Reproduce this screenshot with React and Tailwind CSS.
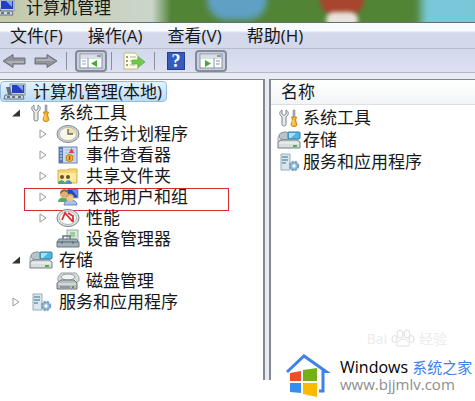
import { useState } from "react";

const Computer = () => (
  <svg viewBox="0 0 24 20" className="h-5 w-6 shrink-0">
    <rect x="7" y="2" width="15" height="11" fill="#c9d5e2" stroke="#8596a8" />
    <rect x="9" y="3" width="12" height="8" fill="#243fc4" />
    <path d="M14 3h6v6z" fill="#7fa6f4" />
    <path d="M3 5h4l2 8H5z" fill="#5b6f86" />
    <path d="M2 13h18l1 4H1z" fill="#d5dde3" stroke="#64727d" />
    <path d="M4 15h3M9 15h3M15 15h3" stroke="#44525d" strokeWidth="1.500" />
  </svg>
);

const Tools = () => (
  <svg viewBox="0 0 24 20" className="h-5 w-6 shrink-0">
    <path
      d="M5 2v4l2 1.500L9 6V2c3 1.500 3 5 0 7v7.500c0 2-4 2-4 0V9C2 7 2 3.500 5 2z"
      fill="#e6eaec"
      stroke="#7d868d"
    />
    <path d="M16 2h2v8h-2z" fill="#a7afb5" stroke="#7b858b" strokeWidth=".5" />
    <path d="M14.500 9h5l-1 3 1.500 5c-1 2-5 2-6 0l1.500-5z" fill="#f6b62d" stroke="#c9851b" />
    <path d="M16 12v5" stroke="#ffe48b" />
  </svg>
);

const Clock = () => (
  <svg viewBox="0 0 24 20" className="h-5 w-6 shrink-0">
    <ellipse cx="12" cy="10" rx="11" ry="8.500" fill="#c9cfd2" stroke="#828b91" />
    <ellipse cx="12" cy="10" rx="8.500" ry="6.500" fill="#fbf7e4" stroke="#a1a7aa" strokeWidth=".6" />
    <path d="M12 10V4a8 6 0 0 1 8 6z" fill="#f8dda0" />
    <path d="M12 5v5h5" fill="none" stroke="#596670" strokeWidth="1.300" />
  </svg>
);

const EventLog = () => (
  <svg viewBox="0 0 24 20" className="h-5 w-6 shrink-0">
    <rect x="3" y="2" width="18" height="16" fill="#cbdcf1" stroke="#6b80a6" />
    <path d="M3 2h4v16H3z" fill="#5879b8" />
    <path d="M4 5h2M4 8h2M4 11h2M4 14h2" stroke="#e9f0fc" />
    <path d="M9 5h10M9 8h10M9 11h10M9 15h10" stroke="#a3b9da" />
    <path d="M15.500 3l2.500 5h-5z" fill="#e63e35" />
    <circle cx="13.500" cy="13" r="3.500" fill="#f4b92f" stroke="#bd7931" />
    <path d="M13.500 11v4" stroke="#cf3128" strokeWidth="1.500" />
  </svg>
);

const SharedFolder = () => (
  <svg viewBox="0 0 24 20" className="h-5 w-6 shrink-0">
    <path d="M2 4h9l2-1h8v14H2z" fill="#f7d66f" stroke="#d3b256" />
    <path d="M3 7h17v9H3z" fill="#fae99f" />
    <circle cx="6" cy="11" r="2" fill="#665331" />
    <circle cx="12" cy="11" r="2" fill="#665331" />
    <path d="M2 18c0-5 7-5 7 0z" fill="#42a68a" />
    <path d="M9 18c0-5 7-5 7 0z" fill="#4793c1" />
  </svg>
);

const Users = () => (
  <svg viewBox="0 0 24 20" className="h-5 w-6 shrink-0">
    <rect x="11" y="2" width="11" height="9" fill="#2544c5" stroke="#9dacbd" />
    <path d="M16 3h5v6z" fill="#6590ed" />
    <path d="M2 15c0-6 10-6 11 0z" fill="#61a861" />
    <circle cx="8" cy="7" r="4" fill="#dfb078" />
    <path d="M4 7c0-6 8-6 8-1L8 4z" fill="#886328" />
    <path d="M8 18c0-7 13-7 13 0z" fill="#a9c0e6" stroke="#6f8cc2" />
    <circle cx="14" cy="11" r="3.500" fill="#f0c690" />
    <path d="M10 11c0-6 8-5 8-1l-4-2z" fill="#d9a544" />
  </svg>
);

const Performance = () => (
  <svg viewBox="0 0 24 20" className="h-5 w-6 shrink-0">
    <ellipse cx="12" cy="10" rx="11" ry="8.500" fill="#e6e9e9" stroke="#777e82" />
    <ellipse cx="12" cy="10" rx="8.500" ry="6.500" fill="#fff" stroke="#b0b7ba" />
    <path d="M6 12l3-7 8 9M12 5l5 3v6" fill="none" stroke="#d72f32" strokeWidth="1.800" />
  </svg>
);

const Device = () => (
  <svg viewBox="0 0 24 20" className="h-5 w-6 shrink-0">
    <rect x="11" y="1" width="11" height="10" fill="#dce4e6" stroke="#a0abae" />
    <rect x="14" y="3" width="5" height="5" fill="#9fcd98" />
    <path d="M7 10V7h7v3" fill="none" stroke="#68757d" strokeWidth="1.500" />
    <path d="M3 10h17l3 3v5H1v-5z" fill="#a3b1bb" stroke="#657985" />
    <path d="M1 13h21M6 12v3M17 12v3" stroke="#536670" />
  </svg>
);

const Storage = () => (
  <svg viewBox="0 0 24 20" className="h-5 w-6 shrink-0">
    <path d="M1 7l3-4h13l3 4v5H1z" fill="#d8dfe0" stroke="#a5b0b5" />
    <ellipse cx="8" cy="6" rx="6" ry="4" fill="#b9c4c9" stroke="#829198" />
    <rect x="11" y="2" width="12" height="7" rx="1" fill="#49b7e9" stroke="#367a9c" />
    <path d="M12 3h7l-5 5h-2z" fill="#a9e1f6" />
    <path d="M1 12l3-2h16l3 2v6H1z" fill="#d8ddde" stroke="#747f84" />
    <path d="M2 13h20" stroke="#f8f9f9" />
    <path d="M16 16h4" stroke="#46b443" strokeWidth="2" />
  </svg>
);

const Disk = () => (
  <svg viewBox="0 0 24 20" className="h-5 w-6 shrink-0">
    <path d="M2 6l3-4h15l3 4v4l-4 2H6l-4-2z" fill="#d8dddd" stroke="#9aa1a2" />
    <ellipse cx="12" cy="6" rx="7" ry="3" fill="#f1f2f1" stroke="#999f9f" />
    <path d="M1 12l4-3h13l3 3v6H1z" fill="#b7bebf" stroke="#71797b" />
    <path d="M2 13h18" stroke="#eef0f0" />
    <path d="M4 16h10" stroke="#667175" />
    <path d="M16 16h2" stroke="#4c9e50" strokeWidth="2" />
  </svg>
);

const Services = () => (
  <svg viewBox="0 0 24 20" className="h-5 w-6 shrink-0">
    <path d="M4 2h9v16H4z" fill="#d9e7ed" stroke="#96acba" />
    <path d="M5 5h6M5 8h6M5 11h4" stroke="#6b97ae" strokeWidth="1.500" />
    <circle cx="17" cy="14" r="4" fill="#b9d6ea" stroke="#79a3c4" strokeWidth="2.500" strokeDasharray="2.200 1" />
    <circle cx="17" cy="14" r="3.500" fill="#a5cae4" stroke="#729bbb" />
    <circle cx="17" cy="14" r="1.400" fill="#fff" />
  </svg>
);

const Arrow = ({ flip }) => (
  <svg viewBox="0 0 24 16" className={flip ? "h-4 w-6 rotate-180" : "h-4 w-6"}>
    <path d="M1 5h12V1.500L23 8l-10 6.500V11H1z" fill="#92949b" stroke="#6d6f78" />
    <path d="M2 6h12V4l6 4H2z" fill="#b0b1b5" />
  </svg>
);

const WindowIcon = ({ play }) => (
  <svg viewBox="0 0 24 16" className="h-4 w-6">
    <rect x="1" y="1" width="22" height="14" fill="#fff" stroke="#83929e" />
    <path d="M1 3h22M1 5h22" stroke="#b3c0ca" />
    <path d="M18 3h4" stroke="#45576b" />
    {play ? (
      <>
        <path d="M15 5v10" stroke="#8493a1" />
        <path d="M6 7l6 3.500L6 14z" fill="#42ad32" />
        <path d="M17 8h4M17 11h4" stroke="#8395a4" />
      </>
    ) : (
      <>
        <path d="M9 5v10" stroke="#8493a1" />
        <path d="M3 8h4M3 11h4" stroke="#7baad3" />
        <path d="M18 7l-6 3.500 6 3.500z" fill="#42ad32" />
      </>
    )}
  </svg>
);

const ExportIcon = () => (
  <svg viewBox="0 0 24 18" className="h-[18px] w-6">
    <path d="M2 1h11l3 3v13H2z" fill="#fffdea" stroke="#c2b984" />
    <path d="M4 5h2M4 9h2M4 13h2" stroke="#77836b" strokeWidth="1.500" />
    <path d="M8 5h6M8 9h4M8 13h5" stroke="#a7b098" />
    <path d="M10 8h6V4.500l7 5.500-7 5.500V12h-6z" fill="#72c94e" stroke="#58a73b" strokeWidth=".7" />
  </svg>
);

const Expander = ({ open }) => (
  <svg viewBox="0 0 10 10" className="h-2.5 w-2.5">
    {open ? (
      <path d="M9 1.500v7H1z" fill="#333" />
    ) : (
      <path d="M2 1l6 4-6 4z" fill="#fff" stroke="#999" />
    )}
  </svg>
);

const HouseLogo = () => (
  <svg viewBox="0 0 48 48" className="h-12 w-12 shrink-0">
    <path d="M3 21L20 5l22 15.500h-3V40h-4" fill="none" stroke="#3d82e8" strokeWidth="3" />
    <path d="M6 22l11-2v10H6z" fill="#ef4c2c" />
    <path d="M19 19l14-2v13H19z" fill="#72b313" />
    <path d="M6 32h11v10L6 41z" fill="#358ff1" />
    <path d="M19 32h14v14l-14-3z" fill="#fbb900" />
  </svg>
);

const Paw = () => (
  <svg viewBox="0 0 24 18" className="h-[18px] w-6" fill="none" stroke="#dedede">
    <ellipse cx="9" cy="5" rx="3" ry="4" />
    <ellipse cx="16" cy="5" rx="3" ry="4" />
    <ellipse cx="3.500" cy="10" rx="2.500" ry="3.500" />
    <ellipse cx="20.500" cy="10" rx="2.500" ry="3.500" />
    <path d="M6 17c-2-3 3-7 6-7s8 4 6 7z" />
  </svg>
);

const menus = ["文件(F)", "操作(A)", "查看(V)", "帮助(H)"];

const tools = [
  { label: "任务计划程序", icon: Clock },
  { label: "事件查看器", icon: EventLog },
  { label: "共享文件夹", icon: SharedFolder },
  { label: "本地用户和组", icon: Users, marked: true },
  { label: "性能", icon: Performance },
  { label: "设备管理器", icon: Device, expandable: false },
];

const items = [
  { label: "系统工具", icon: Tools },
  { label: "存储", icon: Storage },
  { label: "服务和应用程序", icon: Services },
];

const Divider = () => <span className="h-[18px] w-px bg-[#8b8f9c]" />;

const Branch = ({ label, icon: Icon, open, onToggle, nested, expandable = true, marked }) => (
  <div className={nested ? "relative flex h-[21px] items-center pl-[38px]" : "relative flex h-[21px] items-center pl-[11px]"}>
    {marked && <span className="pointer-events-none absolute top-[2px] right-[34px] -bottom-[4px] left-6 border border-[#d52b31]" />}
    <span className="flex w-[18px] shrink-0">
      {expandable && (
        <button type="button" aria-label={label} aria-expanded={!!open} onClick={onToggle}>
          <Expander open={open} />
        </button>
      )}
    </span>
    <Icon />
    <span className="ml-1.5">{label}</span>
  </div>
);

const App = () => {
  const [toolsOpen, setToolsOpen] = useState(true);
  const [storageOpen, setStorageOpen] = useState(true);

  return (
    <div className="min-h-screen bg-white font-['Open_Sans','Noto_Sans_CJK_SC',sans-serif] text-[17px] leading-5 whitespace-nowrap text-[#171717]">
      <header className="relative h-[23px] overflow-hidden border-b border-[#687066] bg-linear-to-r from-[#c3c9a9] from-0% via-[#cbd6cb] via-32% to-[#518435] to-36%">
        <span className="absolute -top-5 left-[207px] h-10 w-[60px] rounded-full bg-[#5fa0c4] blur-[3px]" />
        <span className="absolute -top-4 left-[320px] h-8 w-11 rounded-full bg-[#a7452e] blur-[2px]" />
        <span className="absolute top-3 left-[326px] h-4 w-8 rounded-full bg-[#e9e2dc] blur-[2px]" />
        <span className="absolute -top-3 -right-2 h-11 w-[62px] bg-[#78c8da] blur-[4px]" />
        <div className="relative flex h-4 items-center">
          <span className="-ml-2"><Computer /></span>
          <h1 className="ml-2.5 leading-4">计算机管理</h1>
        </div>
      </header>

      <nav className="flex h-[26px] items-center gap-[25px] border-b border-[#b9bdc9] bg-linear-to-b from-[#f8fbff] from-30% to-[#d3d9eb] to-40% pl-2.5">
        {menus.map((menu) => (
          <button key={menu} type="button">{menu}</button>
        ))}
      </nav>

      <div className="flex h-6 items-center border-b border-[#b5b9c5] bg-linear-to-b from-[#d1d9ed] to-[#dfe0f2] pl-0.5">
        <button type="button" aria-label="后退"><Arrow flip /></button>
        <button type="button" aria-label="前进" className="mr-2 ml-2"><Arrow /></button>
        <Divider />
        <button type="button" aria-label="控制台树" className="mr-1 ml-2 flex h-[22px] w-8 items-center justify-center rounded border-2 border-[#858b9c] bg-[#cbd0df]">
          <WindowIcon />
        </button>
        <Divider />
        <button type="button" aria-label="导出" className="mr-2 ml-2.5"><ExportIcon /></button>
        <Divider />
        <button type="button" aria-label="帮助" className="mr-2.5 ml-3 h-[18px] w-[18px] border border-[#263e89] bg-[#365bc0] font-['Liberation_Serif',serif] text-lg leading-4 font-bold text-white">
          ?
        </button>
        <button type="button" aria-label="操作窗格" className="flex h-[22px] w-8 items-center justify-center rounded border-2 border-[#858b9c] bg-[#cbd0df]">
          <WindowIcon play />
        </button>
      </div>

      <main className="grid grid-cols-[269px_1fr]">
        <aside className="flex min-h-[307px] flex-col bg-[#e9ebf2] pt-1.5 pr-1">
          <div className="flex-1 border-t border-r-2 border-[#858890] bg-white pt-px">
            <div className="flex h-[21px] w-fit items-center rounded-sm border border-[#93bddf] bg-linear-to-b from-[#e4f2fd] to-[#bddcf5] pr-1 pl-0.5">
              <Computer />
              <span className="ml-1.5">计算机管理(本地)</span>
            </div>
            <Branch label="系统工具" icon={Tools} open={toolsOpen} onToggle={() => setToolsOpen(!toolsOpen)} />
            {toolsOpen && tools.map((tool) => <Branch key={tool.label} {...tool} nested />)}
            <Branch label="存储" icon={Storage} open={storageOpen} onToggle={() => setStorageOpen(!storageOpen)} />
            {storageOpen && <Branch label="磁盘管理" icon={Disk} nested expandable={false} />}
            <Branch label="服务和应用程序" icon={Services} />
          </div>
        </aside>

        <section className="flex flex-col">
          <div className="bg-[#e9ebf2] pt-1.5" />
          <div className="flex-1 border-t border-l-2 border-[#858890]">
            <h2 className="h-[25px] border-b border-[#dcdfe2] bg-linear-to-b from-white to-[#f3f4f5] pt-0.5 pl-2.5">名称</h2>
            <ul className="pt-0.5">
              {items.map(({ label, icon: Icon }) => (
                <li key={label} className="flex h-[22px] items-center pl-1.5">
                  <Icon />
                  <span className="ml-0.5">{label}</span>
                </li>
              ))}
            </ul>
          </div>
        </section>
      </main>

      <div className="absolute right-7 bottom-[54px] flex items-end gap-1 text-sm leading-4 text-[#ececec]">
        <span>Bai</span>
        <Paw />
        <span>经验</span>
      </div>

      <footer className="absolute right-0 bottom-0 flex h-[52px] w-[191px] items-center bg-white">
        <HouseLogo />
        <div className="ml-2">
          <p className="text-base leading-[18px] text-black">Windows <span className="text-[15px] text-[#3d82e8]">系统之家</span></p>
          <p className="text-[15px] leading-4 text-[#8d8d8d]">www.bjjmlv.com</p>
        </div>
      </footer>
    </div>
  );
};

export default App;
